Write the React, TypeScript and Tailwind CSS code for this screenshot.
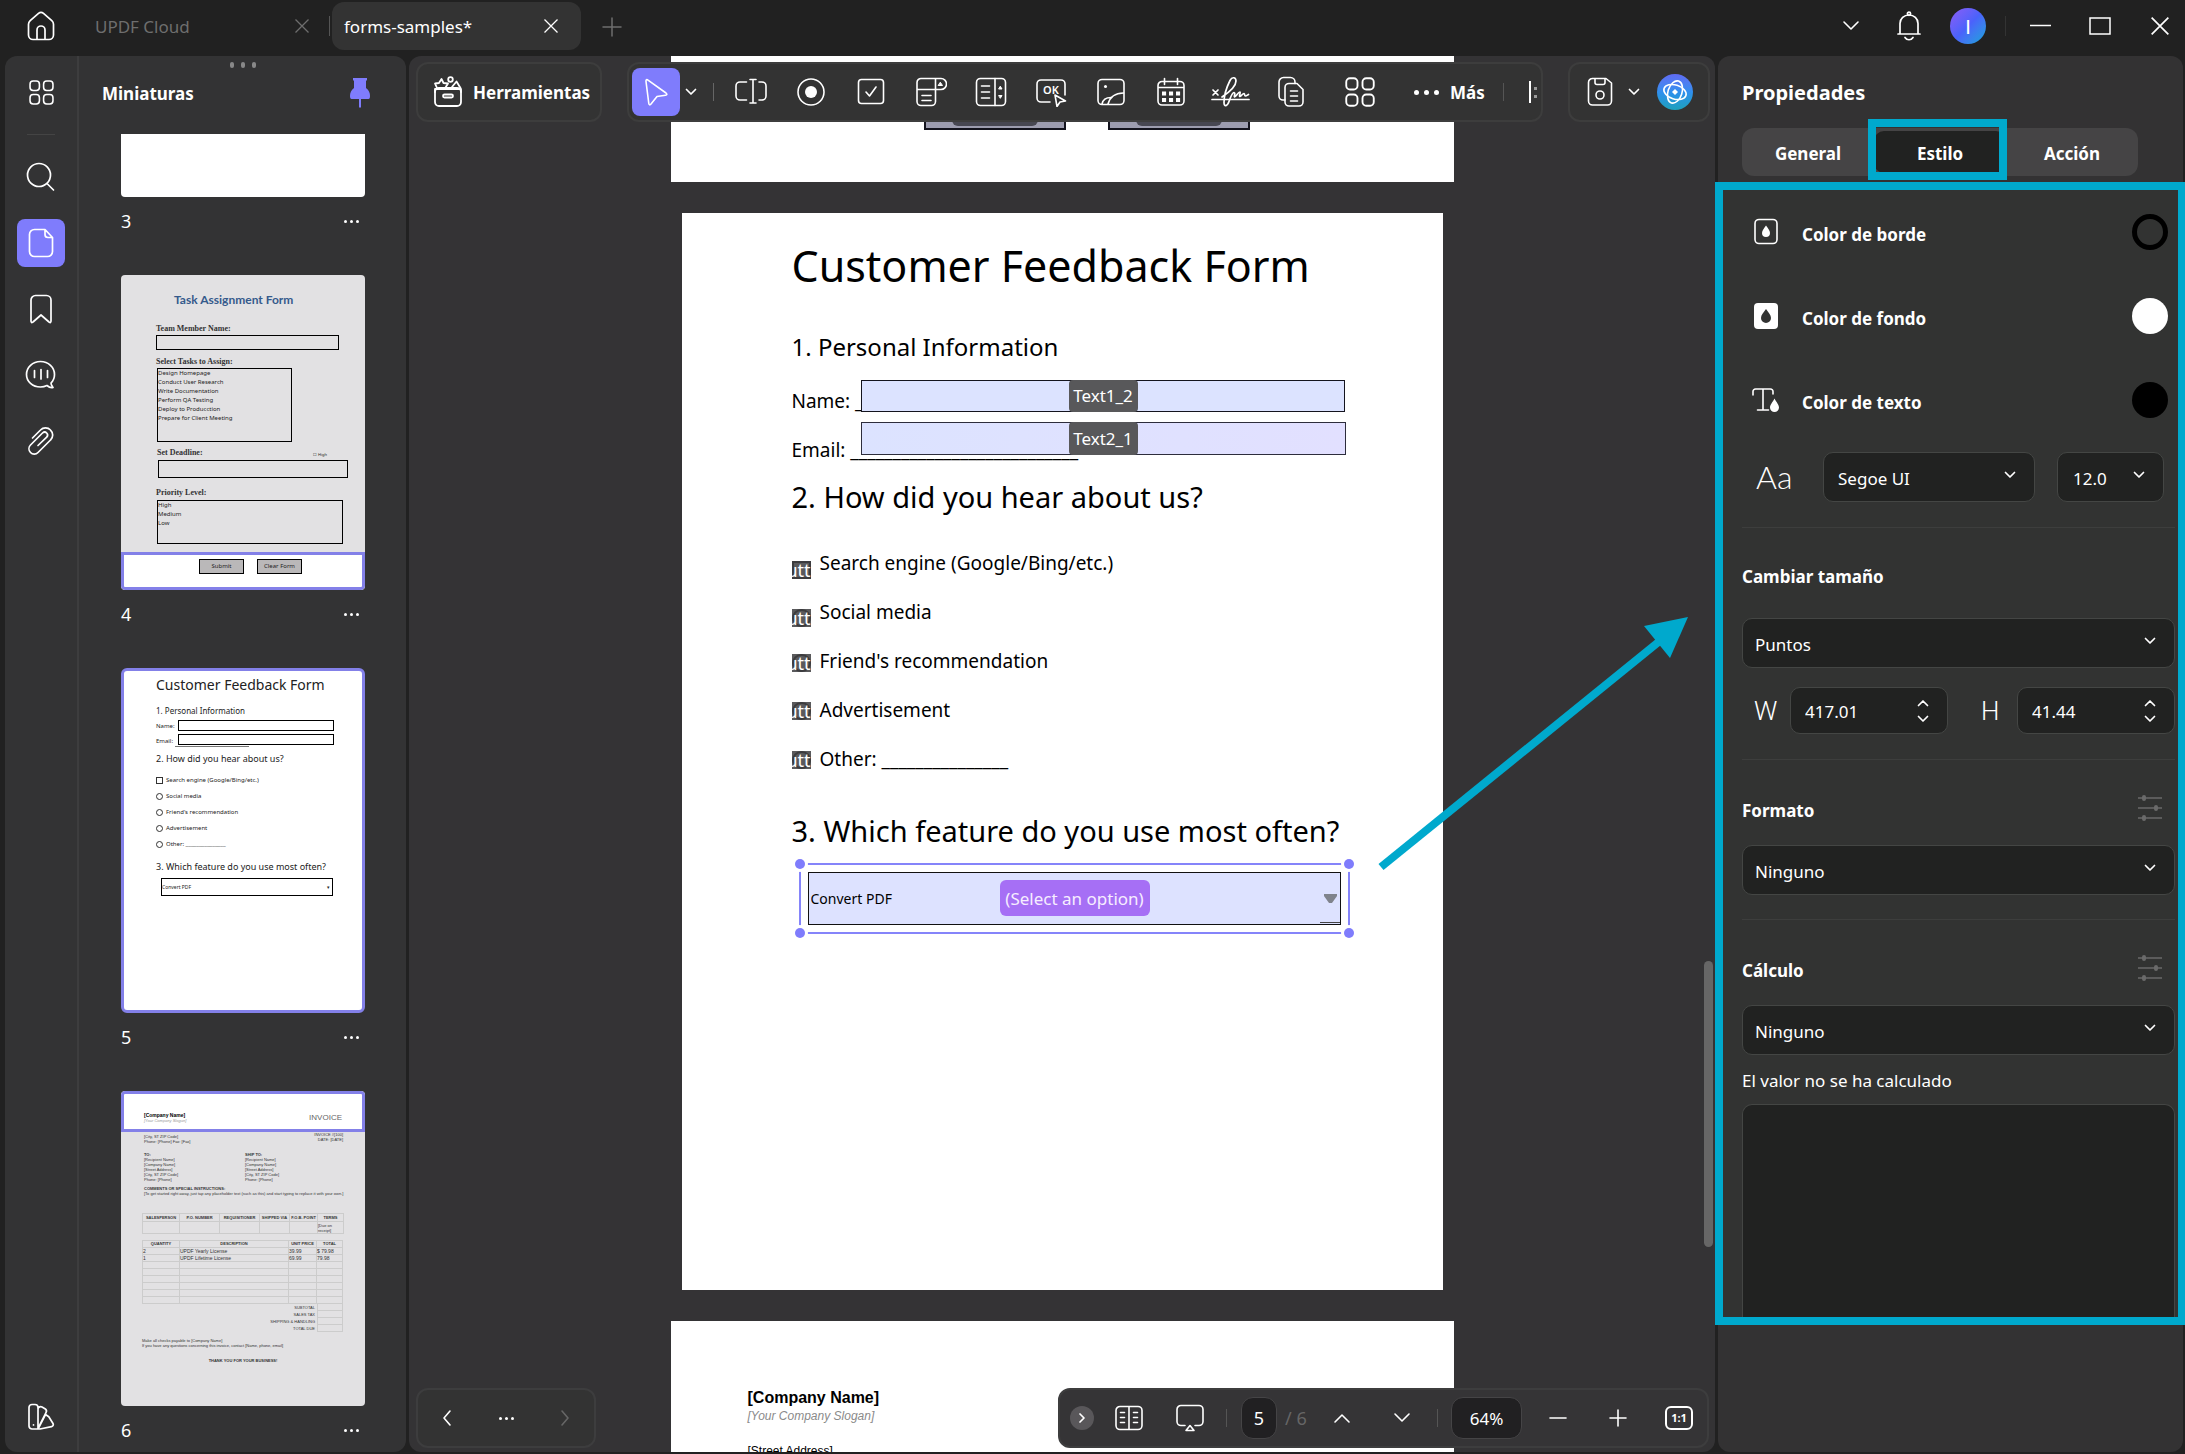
import React from "react";

type IconProps = { w?: number; h?: number; sw?: number; className?: string; children: React.ReactNode };

function Icon({ w = 30, h = 30, sw = 2, className = "", children }: IconProps) {
  return (
    <svg
      width={w}
      height={h}
      viewBox={`0 0 ${w} ${h}`}
      fill="none"
      stroke="currentColor"
      strokeWidth={sw}
      strokeLinecap="round"
      strokeLinejoin="round"
      className={`shrink-0 ${className}`}
      aria-hidden="true"
    >
      {children}
    </svg>
  );
}

const Chevron = ({ className = "" }: { className?: string }) => (
  <Icon w={12} h={8} sw={1.7} className={className}>
    <path d="M1.500 1.500 6 6l4.500-4.500" />
  </Icon>
);

const CloseIcon = ({ size = 14 }: { size?: number }) => (
  <svg width={size} height={size} viewBox="0 0 14 14" stroke="currentColor" strokeWidth="1.3" fill="none" aria-hidden="true">
    <path d="M0.500 0.500 13.500 13.500M13.500 0.500 0.500 13.500" />
  </svg>
);

const GridIcon = ({ s = 24 }: { s?: number }) => (
  <svg width={s} height={s} viewBox="0 0 24 24" fill="none" stroke="currentColor" strokeWidth="1.500" aria-hidden="true">
    <rect x="1" y="1" width="9" height="9" rx="3" />
    <rect x="14" y="1" width="9" height="9" rx="3" />
    <rect x="1" y="14" width="9" height="9" rx="3" />
    <rect x="14" y="14" width="9" height="9" rx="3" />
  </svg>
);

const SlidersIcon = () => (
  <Icon w={24} h={28} sw={2} className="text-[#6a6a6a]">
    <path d="M0 4h24M0 14h24M0 24h24" strokeWidth="1.500" />
    <path d="M6 3v2M18 13v2M6 23v2" strokeWidth="4" />
  </Icon>
);

function Dots({ size = 3 }: { size?: number }) {
  return (
    <svg width={size * 5} height={size} viewBox="0 0 15 3" fill="currentColor" aria-hidden="true">
      <circle cx="1.500" cy="1.500" r="1.500" />
      <circle cx="7.500" cy="1.500" r="1.500" />
      <circle cx="13.500" cy="1.500" r="1.500" />
    </svg>
  );
}

/* ---------- Title bar ---------- */

function TitleBar() {
  return (
    <header className="flex h-14 shrink-0 items-start text-white">
      <button aria-label="Inicio" className="ml-[17px] mt-[2px] flex size-12 items-center justify-center">
        <Icon w={28} h={30} sw={1.7}>
          <path d="M11.500 2.400 3.200 9.600A5 5 0 0 0 1.500 13.300V24a4.500 4.500 0 0 0 4.500 4.500h16a4.500 4.500 0 0 0 4.500-4.500V13.300a5 5 0 0 0-1.700-3.700L16.500 2.400a3.800 3.800 0 0 0-5 0Z" />
          <path d="M10 28V19a4 4 0 0 1 8 0v9" />
        </Icon>
      </button>
      <div className="flex h-13 w-[264px] items-center justify-between pl-[30px] pr-5 text-[#6e6e6e]">
        <button className="pt-[2px] text-[17px] leading-6">UPDF Cloud</button>
        <button aria-label="Cerrar UPDF Cloud">
          <CloseIcon />
        </button>
      </div>
      <div className="mr-[2px] mt-4 h-5 w-px bg-[#555]" />
      <div className="mt-[2px] flex h-12 w-[249px] items-center justify-between rounded-xl bg-[#333] pl-3 pr-[23px]">
        <button className="pt-[2px] text-[17px] leading-6">forms-samples*</button>
        <button aria-label="Cerrar forms-samples">
          <CloseIcon />
        </button>
      </div>
      <button aria-label="Nueva pestaña" className="ml-[21px] mt-[17px] text-[#6e6e6e]">
        <Icon w={20} h={20} sw={1.5}>
          <path d="M10 1v18M1 10h18" />
        </Icon>
      </button>
      <div className="ml-auto flex h-13 items-center">
        <button aria-label="Más pestañas" className="mr-[37px]">
          <Icon w={18} h={12} sw={1.6}>
            <path d="m2 2 7 7 7-7" />
          </Icon>
        </button>
        <button aria-label="Notificaciones" className="mr-[29px]">
          <Icon w={24} h={30} sw={1.7}>
            <circle cx="12" cy="2.800" r="1.600" />
            <path d="M3 23V12.500a9 8.500 0 0 1 18 0V23M1 23h22M8 26.500c2 3 6 3 8 0" />
          </Icon>
        </button>
        <button
          aria-label="Cuenta"
          className="mr-[19px] flex size-9 items-center justify-center rounded-full bg-linear-135 from-[#8a5cf6] via-[#4a62fb] to-[#06a4d8] font-['Lato',sans-serif] text-xl"
        >
          I
        </button>
        <div className="mr-6 h-5 w-px bg-[#333]" />
        <button aria-label="Minimizar" className="mr-[38px]">
          <svg width="21" height="20" stroke="currentColor" strokeWidth="1.500" aria-hidden="true">
            <path d="M0 9.500h21" />
          </svg>
        </button>
        <button aria-label="Maximizar" className="mr-10">
          <svg width="22" height="18" fill="none" stroke="currentColor" strokeWidth="1.500" aria-hidden="true">
            <rect x="1" y="1" width="20" height="16" />
          </svg>
        </button>
        <button aria-label="Cerrar" className="mr-4">
          <CloseIcon size={18} />
        </button>
      </div>
    </header>
  );
}

/* ---------- Left rail ---------- */

function RailButton({ label, active, children }: { label: string; active?: boolean; children: React.ReactNode }) {
  return (
    <button
      aria-label={label}
      className={`flex size-12 shrink-0 items-center justify-center rounded-lg text-white ${active ? "bg-[#7f7cfc]" : ""}`}
    >
      {children}
    </button>
  );
}

function Rail() {
  return (
    <nav className="flex w-[74px] shrink-0 flex-col items-center gap-[18px] border-r-2 border-[#3d3d3e] pb-[11px] pt-3">
      <RailButton label="Organizar">
        <GridIcon s={25} />
      </RailButton>
      <div className="h-px w-7 shrink-0 bg-[#444]" />
      <RailButton label="Buscar">
        <Icon sw={1.7}>
          <circle cx="13" cy="13" r="11.500" />
          <path d="m21.500 22 6 6" />
        </Icon>
      </RailButton>
      <RailButton label="Miniaturas" active>
        <Icon w={26} h={30} sw={1.7}>
          <path d="M17 1.500H6.500a5 5 0 0 0-5 5v17a5 5 0 0 0 5 5h13a5 5 0 0 0 5-5V9.500ZM17 1.500v5a3 3 0 0 0 3 3h4.500" />
        </Icon>
      </RailButton>
      <RailButton label="Marcadores">
        <Icon w={24} h={30} sw={1.7}>
          <path d="M2 6a4.500 4.500 0 0 1 4.500-4.500h11A4.500 4.500 0 0 1 22 6v21c0 1.500-1 2-2 1l-8-7-8 7c-1 1-2 .5-2-1Z" />
        </Icon>
      </RailButton>
      <RailButton label="Comentarios">
        <Icon w={32} h={30} sw={1.7}>
          <path d="M22 25.500A17 17 0 0 1 15.500 27C7.500 27 1.500 21.500 1.500 14.500S7.500 1.500 15.500 1.500s14 6 14 13a12 12 0 0 1-3.500 8.500c0 2 1 3 2 4.500-2 .6-4-.2-6-2ZM9.500 10.500v7M16 9.500v9.500M22.500 10.500v7" />
        </Icon>
      </RailButton>
      <RailButton label="Adjuntos">
        <Icon w={28} h={30} sw={1.7}>
          <path d="M5.500 12 13.500 4a6.800 6.800 0 0 1 10 0 6.800 6.800 0 0 1 0 10L11 26.500a5 5 0 0 1-7.500 0 5.400 5.400 0 0 1 0-7.500L15.500 7c1.300-1.200 3-1.200 4.200 0s1 3 0 4.200L11 19.500" />
        </Icon>
      </RailButton>
      <div className="mt-auto">
        <RailButton label="Apariencia">
          <Icon w={28} h={28} sw={1.7}>
            <path d="M2 4.500A3 3 0 0 1 5 1.500h3a3 3 0 0 1 3 3V26H5a3 3 0 0 1-3-3ZM11 5.500a3 3 0 0 1 4-1.500l3 1.700a3 3 0 0 1 1 4L11 25.500M18.500 11.500l3.300 2.300L26 20.500c.8 1.500 0 2.700-1.500 3.200L13 26h-2Z" />
            <path d="M6.500 21.800v.1" />
          </Icon>
        </RailButton>
      </div>
    </nav>
  );
}

/* ---------- Thumbnails ---------- */

function ThumbLabel({ n }: { n: number }) {
  return (
    <div className="mb-[30px] flex h-12 items-center justify-between pr-[6px] text-lg text-white">
      <span>{n}</span>
      <button aria-label={`Opciones de la página ${n}`}>
        <Dots />
      </button>
    </div>
  );
}

function ThumbFour() {
  return (
    <div className="flex h-[315px] flex-col overflow-hidden rounded bg-[#e2e1e3] text-[6px] leading-[9px] text-[#222]">
      <div className="mt-[17px] pl-[53px] font-['Lato',sans-serif] text-[12px] font-bold leading-4 text-[#355a8c]">Task Assignment Form</div>
      <div className="mt-4 pl-[35px] font-['Liberation_Serif',serif] text-[8px] font-bold leading-[10px] text-[#333]">Team Member Name:</div>
      <div className="ml-[35px] mt-px h-[15px] w-[183px] border border-black" />
      <div className="mt-[7px] pl-[35px] font-['Liberation_Serif',serif] text-[8px] font-bold leading-[10px] text-[#333]">Select Tasks to Assign:</div>
      <div className="ml-9 mt-px h-[74px] w-[135px] border border-black">
        <div>Design Homepage</div>
        <div>Conduct User Research</div>
        <div>Write Documentation</div>
        <div>Perform QA Testing</div>
        <div>Deploy to Producction</div>
        <div>Prepare for Client Meeting</div>
      </div>
      <div className="mt-[6px] flex justify-between pl-9 pr-[38px]">
        <span className="font-['Liberation_Serif',serif] text-[8px] font-bold leading-[10px] text-[#333]">Set Deadline:</span>
        <span className="pt-1 text-[4px] leading-[6px]">☐ High</span>
      </div>
      <div className="ml-[37px] mt-[2px] h-[18px] w-[190px] border border-black" />
      <div className="mt-[10px] pl-[35px] font-['Liberation_Serif',serif] text-[8px] font-bold leading-[10px] text-[#333]">Priority Level:</div>
      <div className="ml-9 mt-[2px] h-11 w-[186px] border border-black">
        <div>High</div>
        <div>Medium</div>
        <div>Low</div>
      </div>
      <div className="mt-auto flex h-[38px] gap-[13px] rounded-b border-[3px] border-[#8380e8] bg-white pl-[75px] pt-1">
        <div className="flex h-[15px] w-[45px] items-center justify-center border border-black bg-[#bab8b9]">Submit</div>
        <div className="flex h-[15px] w-[45px] items-center justify-center border border-black bg-[#bab8b9]">Clear Form</div>
      </div>
    </div>
  );
}

const choices = ["Search engine (Google/Bing/etc.)", "Social media", "Friend's recommendation", "Advertisement", "Other: _______________"];

function ThumbFive() {
  return (
    <div className="h-[345px] overflow-hidden rounded-md border-[3px] border-[#8380e8] bg-white pl-8 text-[6px] leading-[10px] text-[#222]">
      <div className="mt-[4px] text-[14px] leading-5">Customer Feedback Form</div>
      <div className="mt-[11px] text-[8px] leading-[10px]">1. Personal Information</div>
      <div className="mt-1 flex items-end gap-1">
        <span className="w-[18px]">Name:</span>
        <div className="h-[11px] w-[156px] border border-black" />
      </div>
      <div className="mt-[3px] flex h-3 items-start gap-1">
        <span className="w-[18px] pt-[2px]">Email:</span>
        <div className="h-[11px] w-[156px] border border-black" />
      </div>
      <div className="ml-[19px] w-[74px] border-t border-[#777]" />
      <div className="mt-[5px] text-[9px] leading-[14px]">2. How did you hear about us?</div>
      <div className="mt-[6px]">
        {choices.map((c, i) => (
          <div key={c} className="flex h-4 items-center gap-[3px]">
            <span className={`size-[7px] border border-[#333] ${i ? "rounded-full" : ""}`} />
            <span className="whitespace-nowrap">{c}</span>
          </div>
        ))}
      </div>
      <div className="mt-2 whitespace-nowrap text-[9px] leading-[14px]">3. Which feature do you use most often?</div>
      <div className="ml-[5px] mt-1 flex h-[18px] w-[172px] items-center justify-between border border-black pr-[2px] text-[5px]">
        <span>Convert PDF</span>
        <span>▾</span>
      </div>
    </div>
  );
}

const address = ["[Recipient Name]", "[Company Name]", "[Street Address]", "[City, ST ZIP Code]", "Phone: [Phone]"];

function ThumbSix() {
  return (
    <div className="h-[315px] overflow-hidden rounded bg-[#e2e1e3] font-['Liberation_Sans',sans-serif] text-[4px] leading-[5px] text-[#333]">
      <div className="flex h-[41px] justify-between rounded-t border-[3px] border-[#8380e8] bg-white pl-5 pr-5 pt-[18px]">
        <div className="leading-[6px]">
          <div className="text-[5px] font-bold text-black">[Company Name]</div>
          <div className="italic text-[#999]">[Your Company Slogan]</div>
        </div>
        <div className="text-[8px] leading-3 text-[#666]">INVOICE</div>
      </div>
      <div className="flex justify-between pl-[23px] pr-[22px]">
        <div className="pt-[2px]">
          <div>[City, ST ZIP Code]</div>
          <div>Phone: [Phone] Fax: [Fax]</div>
        </div>
        <div className="text-right">
          <div>INVOICE #[100]</div>
          <div>DATE: [DATE]</div>
        </div>
      </div>
      <div className="mt-2 grid grid-cols-[101px_1fr] pl-[23px]">
        {["TO:", "SHIP TO:"].map((t) => (
          <div key={t}>
            <div className="font-bold">{t}</div>
            {address.map((a) => (
              <div key={a}>{a}</div>
            ))}
          </div>
        ))}
      </div>
      <div className="mt-1 pl-[23px]">
        <div className="font-bold">COMMENTS OR SPECIAL INSTRUCTIONS:</div>
        <div className="whitespace-nowrap">[To get started right away, just tap any placeholder text (such as this) and start typing to replace it with your own.]</div>
      </div>
      <table className="ml-[21px] mt-[17px] w-[201px] table-fixed border-collapse text-center">
        <tbody>
          <tr className="h-2 font-bold">
            <td className="w-[37px] border border-[#ccc]">SALESPERSON</td>
            <td className="w-10 border border-[#ccc]">P.O. NUMBER</td>
            <td className="w-10 border border-[#ccc]">REQUISITIONER</td>
            <td className="w-[30px] border border-[#ccc]">SHIPPED VIA</td>
            <td className="w-7 border border-[#ccc]">F.O.B. POINT</td>
            <td className="w-[26px] border border-[#ccc]">TERMS</td>
          </tr>
          <tr className="h-3">
            {[0, 1, 2, 3, 4].map((i) => (
              <td key={i} className="border border-[#ccc]" />
            ))}
            <td className="border border-[#ccc] text-left">[Due on receipt]</td>
          </tr>
        </tbody>
      </table>
      <table className="ml-[21px] mt-[6px] w-[201px] table-fixed border-collapse text-[5px] leading-[6px]">
        <tbody>
          <tr className="h-[7px] text-center text-[4px] font-bold">
            <td className="w-[37px] border border-[#ccc]">QUANTITY</td>
            <td className="border border-[#ccc]">DESCRIPTION</td>
            <td className="w-7 border border-[#ccc]">UNIT PRICE</td>
            <td className="w-[26px] border border-[#ccc]">TOTAL</td>
          </tr>
          {[
            ["2", "UPDF Yearly License", "39.99", "$ 79.98"],
            ["1", "UPDF Lifetime License", "69.99", "79.98"],
            ["", "", "", ""],
            ["", "", "", ""],
            ["", "", "", ""],
            ["", "", "", ""],
            ["", "", "", ""],
            ["", "", "", ""],
          ].map((r, i) => (
            <tr key={i} className="h-[7px]">
              {r.map((c, j) => (
                <td key={j} className="border border-[#ccc]">
                  {c}
                </td>
              ))}
            </tr>
          ))}
        </tbody>
      </table>
      <div className="ml-[21px] w-[201px]">
        {["SUBTOTAL", "SALES TAX", "SHIPPING & HANDLING", "TOTAL DUE"].map((t) => (
          <div key={t} className="flex h-[7px] items-center justify-end gap-[2px]">
            {t}
            <span className="h-[7px] w-[26px] border-x border-b border-[#ccc]" />
          </div>
        ))}
      </div>
      <div className="mt-[6px] pl-[21px]">
        <div>Make all checks payable to [Company Name]</div>
        <div>If you have any questions concerning this invoice, contact [Name, phone, email]</div>
      </div>
      <div className="mt-[10px] text-center font-bold">THANK YOU FOR YOUR BUSINESS!</div>
    </div>
  );
}

function Thumbnails() {
  return (
    <section className="flex min-w-0 flex-1 flex-col text-white">
      <div className="flex justify-center gap-[7px] pt-[6px]">
        <span className="h-[6px] w-1 rounded bg-[#888]" />
        <span className="h-[6px] w-1 rounded bg-[#888]" />
        <span className="h-[6px] w-1 rounded bg-[#888]" />
      </div>
      <div className="flex h-[66px] items-start justify-between pl-[23px] pr-9 pt-[10px]">
        <h2 className="pt-1 text-[17px] font-bold leading-6">Miniaturas</h2>
        <button aria-label="Fijar panel" className="text-[#7f7cfc]">
          <svg width="20" height="30" viewBox="0 0 20 30" fill="currentColor" aria-hidden="true">
            <path d="M3 0h14v2.500h-1v7.500c3 2 4 5 4 8 0 2-.5 3-1.500 3h-17C.5 21 0 20 0 18c0-3 1-6 4-8V2.500H3ZM9 21h2v8.500H9Z" />
          </svg>
        </button>
      </div>
      <div className="min-h-0 flex-1 overflow-hidden pl-[42px] pr-[41px]">
        <div className="h-[63px] rounded-b bg-white" />
        <ThumbLabel n={3} />
        <ThumbFour />
        <ThumbLabel n={4} />
        <ThumbFive />
        <ThumbLabel n={5} />
        <ThumbSix />
        <ThumbLabel n={6} />
      </div>
    </section>
  );
}

/* ---------- Canvas toolbars ---------- */

const formTools: { label: string; icon: React.ReactNode }[] = [
  {
    label: "Campo de texto",
    icon: (
      <Icon w={34} h={30} sw={1.6}>
        <path d="M12.500 5H6a4 4 0 0 0-4 4v10a4 4 0 0 0 4 4h6.500M25 5h3a4 4 0 0 1 4 4v10a4 4 0 0 1-4 4h-3M16 2.500h6M16 26h6M19 2.500V26" />
      </Icon>
    ),
  },
  {
    label: "Botón de opción",
    icon: (
      <Icon sw={1.6}>
        <circle cx="15" cy="15" r="13" />
        <circle cx="15" cy="15" r="6" fill="currentColor" stroke="none" />
      </Icon>
    ),
  },
  {
    label: "Casilla",
    icon: (
      <Icon w={28} h={30} sw={1.6}>
        <rect x="1.500" y="2.500" width="25" height="24" rx="3" />
        <path d="m9 15 3.500 4 6.500-9" />
      </Icon>
    ),
  },
  {
    label: "Menú desplegable",
    icon: (
      <Icon w={32} h={30} sw={1.6}>
        <path d="M6 1.500h20a5 5 0 0 1 0 11H2V5.500a4 4 0 0 1 4-4ZM20.500 1.500v23a4 4 0 0 1-4 4H6a4 4 0 0 1-4-4v-12M7 18.500h9M7 23.500h9" />
        <path d="M23.500 8.500h4l-2-3Z" fill="currentColor" strokeWidth="1" />
      </Icon>
    ),
  },
  {
    label: "Cuadro de lista",
    icon: (
      <Icon w={32} h={30} sw={1.6}>
        <rect x="1.500" y="1.500" width="29" height="27" rx="4" />
        <path d="M20 1.500v27M6.500 9h8M6.500 15h8M6.500 21h8" />
        <path d="M24 12h3l-1.500-2.500ZM24 18.500h3L25.500 21Z" fill="currentColor" strokeWidth="1" />
      </Icon>
    ),
  },
  {
    label: "Botón",
    icon: (
      <Icon w={32} h={30} sw={1.6}>
        <path d="M15 25H6a4 4 0 0 1-4-4V7a4 4 0 0 1 4-4h20a4 4 0 0 1 4 4v11M20 18l2 11.500 3-4.500 5.500-1Z" />
        <text x="8" y="17" fill="currentColor" stroke="none" fontSize="11" fontWeight="600">
          OK
        </text>
      </Icon>
    ),
  },
  {
    label: "Imagen",
    icon: (
      <Icon w={30} h={30} sw={1.6}>
        <rect x="2" y="2.500" width="26" height="25" rx="4" />
        <path d="M6 27c1-5 5-6.500 9-6.500M12 27c2-7 7-11 15.500-11" />
        <circle cx="9.500" cy="9.500" r="1.500" fill="currentColor" stroke="none" />
      </Icon>
    ),
  },
  {
    label: "Fecha",
    icon: (
      <Icon w={30} h={30} sw={1.6}>
        <path d="M6 4.500h18a4 4 0 0 1 4 4V24a4 4 0 0 1-4 4H6a4 4 0 0 1-4-4V8.500a4 4 0 0 1 4-4ZM2 10.500h26M8.500 1.500v6M21.500 1.500v6" />
        <path d="M8 16.500h.1M15 16.500h.1M22 16.500h.1M8 23h.1M15 23h.1M22 23h.1" strokeWidth="4" strokeLinecap="square" />
      </Icon>
    ),
  },
  {
    label: "Firma",
    icon: (
      <Icon w={40} h={32} sw={1.7}>
        <path d="m2 14 5 5M7 14l-5 5" />
        <path d="M1 23.500h37" />
        <path d="M11 21c6-4 14-10 14-16 0-4-4-4.500-6-.5-3 6-6 15-6 22 0 5 3.500 3.500 5-1 1.500-4 3-9 5-9 2 .5-.5 4 .5 4.500 1.500 0 4-5.500 5.500-5 1 .5-1.500 4.500 0 4.500 1.500-.5 2.500-3 4-3 1.200.3 0 2.500 1.500 2.500 1 0 2-1 3-1.500" />
      </Icon>
    ),
  },
  {
    label: "Duplicar campos",
    icon: (
      <Icon w={28} h={32} sw={1.6}>
        <path d="M8 24H6a4 4 0 0 1-4-4V6a4.500 4.500 0 0 1 4.500-4.500h7A4.500 4.500 0 0 1 18 6v1.500" />
        <path d="M12 7.500h8l6 6V26a4 4 0 0 1-4 4H12a4 4 0 0 1-4-4V11.500a4 4 0 0 1 4-4ZM13.500 15h7M13.500 20h7M13.500 25h7" />
      </Icon>
    ),
  },
];

function TopToolbar() {
  return (
    <div className="absolute left-[7px] right-[5px] top-[6px] flex h-15 text-white">
      <button className="flex w-[186px] shrink-0 items-center gap-[10px] rounded-xl border-2 border-[#3d3d3d] bg-[#333] pl-[15px] text-[17px] font-bold">
        <Icon w={30} h={32} sw={1.8}>
          <rect x="2" y="12" width="26" height="18" rx="4" />
          <path d="M2 16V13h26v3M11.500 18.500h7a1.500 1.500 0 0 1 0 3h-7a1.500 1.500 0 0 1 0-3ZM4 12 2 7.500l4-.5 2.500-4 2 4 4.500.5-2.500 4M19 11l4.500-5.500L27.500 12" />
          <circle cx="17.500" cy="3.500" r="2.300" />
        </Icon>
        <span className="pt-[2px]">Herramientas</span>
      </button>
      <div className="ml-[25px] flex min-w-0 flex-1 items-center overflow-hidden rounded-xl border-2 border-[#3d3d3d] bg-[#333] pl-[3px]">
        <button aria-label="Seleccionar" className="flex size-12 shrink-0 items-center justify-center rounded-lg bg-[#7f7cfc]">
          <Icon w={26} h={30} sw={1.6}>
            <path d="M3 4.500c-.2-1.800.8-2.300 2-1.300L23 16c1.500 1.200 1 2-.5 2.200l-8.500 1.300L8 27c-1 1.300-2 1-2.200-.5Z" />
          </Icon>
        </button>
        <button aria-label="Opciones de selección" className="ml-[5px] shrink-0">
          <Chevron />
        </button>
        <div className="ml-4 mr-[7px] h-[18px] w-px shrink-0 bg-[#666]" />
        {formTools.map((t) => (
          <button key={t.label} aria-label={t.label} className="flex h-12 w-15 shrink-0 items-center justify-center">
            {t.icon}
          </button>
        ))}
        <button aria-label="Alinear" className="flex h-12 w-[78px] shrink-0 items-center justify-center">
          <GridIcon s={30} />
        </button>
        <button className="ml-[15px] flex shrink-0 items-center gap-[11px] text-[17px] font-bold">
          <Dots size={5} />
          <span className="pt-[2px]">Más</span>
        </button>
        <div className="ml-[18px] h-[18px] w-px shrink-0 bg-[#555]" />
        <button aria-label="Alinear a la izquierda" className="ml-[25px] shrink-0">
          <svg width="12" height="24" viewBox="0 0 12 24" fill="currentColor" aria-hidden="true">
            <path d="M0 1h2v22H0Z" />
            <path d="M5 7h3v3H5ZM5 15h3v3H5Z" opacity=".5" />
          </svg>
        </button>
      </div>
      <div className="ml-[25px] flex w-[142px] shrink-0 items-center rounded-xl border-2 border-[#3d3d3d] bg-[#333] pl-[17px]">
        <button aria-label="Guardar">
          <Icon w={26} h={30} sw={1.6}>
            <path d="M5 1.500h14L24.500 6v18a4 4 0 0 1-4 4h-15a4 4 0 0 1-4-4V5.500a4 4 0 0 1 4-4ZM8 1.500v4a2 2 0 0 0 2 2h6a2 2 0 0 0 2-2v-4" />
            <circle cx="13" cy="18" r="4" />
          </Icon>
        </button>
        <button aria-label="Opciones de guardado" className="ml-[15px]">
          <Chevron />
        </button>
        <button
          aria-label="Asistente de IA"
          className="ml-[17px] flex size-9 items-center justify-center rounded-full bg-linear-to-b from-[#5f6bf4] via-[#2f8fee] to-[#1fa0bb]"
        >
          <Icon w={30} h={30} sw={1.6}>
            <ellipse cx="15" cy="15" rx="7" ry="11.500" transform="rotate(18 15 15)" />
            <ellipse cx="15" cy="15" rx="7" ry="11.500" transform="rotate(108 15 15)" />
            <path d="m15 12 3 3-3 3-3-3Z" fill="currentColor" stroke="none" />
          </Icon>
        </button>
      </div>
    </div>
  );
}

function BottomToolbars() {
  return (
    <div className="absolute bottom-1 left-[7px] right-[6px] flex h-15 justify-between text-white">
      <div className="flex w-[180px] items-center justify-between rounded-xl border-2 border-[#3d3d3e] bg-[#333] px-6">
        <button aria-label="Vista anterior">
          <Icon w={10} h={18} sw={1.6}>
            <path d="M8 2 2 9l6 7" />
          </Icon>
        </button>
        <button aria-label="Más vistas">
          <Dots />
        </button>
        <button aria-label="Vista siguiente" className="text-[#666]">
          <Icon w={10} h={18} sw={1.6}>
            <path d="m2 2 6 7-6 7" />
          </Icon>
        </button>
      </div>
      <div className="flex w-[651px] items-center rounded-xl border-2 border-[#3d3d3e] bg-[#353436] pl-[10px]">
        <button aria-label="Contraer barra" className="flex size-6 items-center justify-center rounded-full bg-[#59575a]">
          <Icon w={8} h={12} sw={1.7}>
            <path d="m2 2 4 4-4 4" />
          </Icon>
        </button>
        <button aria-label="Modo de lectura" className="ml-5">
          <Icon w={30} h={26} sw={1.6}>
            <path d="M6 1.500h18a4 4 0 0 1 4 4v15a4 4 0 0 1-4 4H6a4 4 0 0 1-4-4v-15a4 4 0 0 1 4-4ZM15 1.500v23M6.500 7.500h4M6.500 12.500h4M6.500 17.500h4M19.500 7.500h4M19.500 12.500h4M19.500 17.500h4" />
          </Icon>
        </button>
        <button aria-label="Presentación" className="ml-[31px]">
          <Icon w={30} h={28} sw={1.6}>
            <path d="M10 21.500H6a4 4 0 0 1-4-4v-12a4 4 0 0 1 4-4h18a4 4 0 0 1 4 4v12a4 4 0 0 1-4 4h-4M15 21.500l4 5h-8Z" />
          </Icon>
        </button>
        <div className="ml-[21px] h-[18px] w-px bg-[#555]" />
        <input
          aria-label="Página"
          defaultValue="5"
          className="ml-[14px] h-[42px] w-9 rounded-xl border border-[#454446] bg-[#212022] text-center text-lg text-white"
        />
        <span className="ml-2 w-7 text-lg text-[#666]">/ 6</span>
        <button aria-label="Página anterior" className="ml-5">
          <Icon w={18} h={12} sw={1.6}>
            <path d="m2 10 7-7 7 7" />
          </Icon>
        </button>
        <button aria-label="Página siguiente" className="ml-[42px]">
          <Icon w={18} h={12} sw={1.6}>
            <path d="m2 2 7 7 7-7" />
          </Icon>
        </button>
        <div className="ml-[26px] h-[18px] w-px bg-[#555]" />
        <input
          aria-label="Zoom"
          defaultValue="64%"
          className="ml-[13px] h-[42px] w-[71px] rounded-xl border border-[#454446] bg-[#212022] text-center text-[17px] text-white"
        />
        <button aria-label="Alejar" className="ml-[26px]">
          <Icon w={20} h={18} sw={1.6}>
            <path d="M2 9h16" />
          </Icon>
        </button>
        <button aria-label="Acercar" className="ml-10">
          <Icon w={20} h={18} sw={1.6}>
            <path d="M2 9h16M10 1v16" />
          </Icon>
        </button>
        <button aria-label="Tamaño real" className="ml-[37px] flex h-6 w-7 items-center justify-center rounded-md border-2 border-white text-[11px] font-bold leading-4">
          1:1
        </button>
      </div>
    </div>
  );
}

/* ---------- Document pages ---------- */

function FieldTag({ children }: { children: React.ReactNode }) {
  return <span className="absolute inset-y-0 left-[208px] flex w-[69px] items-center justify-center rounded bg-[#58585a] text-[17px] text-white">{children}</span>;
}

const tagOffsets = ["mt-3", "mt-[10px]", "mt-[2px]", "mt-0", "mt-0"];

function FeedbackPage() {
  return (
    <article className="mx-auto mt-[31px] h-[1077px] w-[761px] shrink-0 bg-white pl-[110px] pt-[22px] text-black">
      <h1 className="whitespace-nowrap text-[43px] leading-[62px]">Customer Feedback Form</h1>
      <h2 className="mt-8 text-[24px] leading-9">1. Personal Information</h2>
      <div className="relative mt-5 h-[30px] text-[19px] leading-8">
        <label htmlFor="name">Name: _</label>
        <div className="absolute left-[69px] -top-[5px] h-8 w-[484px]">
          <input id="name" className="size-full border border-[#14141e] bg-[#dce3ff]" />
          <FieldTag>Text1_2</FieldTag>
        </div>
      </div>
      <div className="relative mt-5 h-[30px] text-[19px] leading-[30px]">
        <label htmlFor="email">Email: ___________________________</label>
        <div className="absolute left-[69px] -top-[13px] h-[33px] w-[485px]">
          <input id="email" className="size-full border border-[#2d2d3c] bg-linear-to-r from-[#dce3ff] to-[#e2e0ff]" />
          <FieldTag>Text2_1</FieldTag>
        </div>
      </div>
      <h2 className="mt-3 text-[29px] leading-10">2. How did you hear about us?</h2>
      <div className="mt-[22px] text-[19px]">
        {choices.map((c, i) => (
          <label key={c} className="flex h-[49px] items-center gap-[9px]">
            <span className={`relative h-[18px] w-[19px] overflow-hidden bg-[#5a5a5c] ${tagOffsets[i]}`}>
              <input
                type={i === 0 ? "checkbox" : "radio"}
                name="source"
                className={`absolute inset-0 size-full appearance-none border-2 border-[#3c3c3e] ${i === 0 ? "" : "rounded-full"}`}
              />
              <span className="absolute -left-[5px] -top-px text-lg leading-5 text-white">utt</span>
            </span>
            {c}
          </label>
        ))}
      </div>
      <h2 className="mt-[27px] whitespace-nowrap text-[29px] leading-10">3. Which feature do you use most often?</h2>
      <div className="relative ml-[7px] mt-3 h-[71px] w-[551px] border-2 border-[#8584fa] p-[7px]">
        <span className="absolute -left-[6px] -top-[6px] size-[10px] rounded-full bg-[#7f7cfc] ring-3 ring-white" />
        <span className="absolute -right-[6px] -top-[6px] size-[10px] rounded-full bg-[#7f7cfc] ring-3 ring-white" />
        <span className="absolute -bottom-[6px] -left-[6px] size-[10px] rounded-full bg-[#7f7cfc] ring-3 ring-white" />
        <span className="absolute -bottom-[6px] -right-[6px] size-[10px] rounded-full bg-[#7f7cfc] ring-3 ring-white" />
        <div className="relative size-full">
          <select aria-label="Función" className="size-full appearance-none border border-[#111] bg-[#dde2ff] pl-[2px] text-[14px] text-black">
            <option>Convert PDF</option>
          </select>
          <span className="absolute left-[192px] top-[8px] flex h-9 w-[150px] items-center justify-center rounded-md bg-[#a66ff5] pt-[2px] text-[17px] text-[#f6edff]">
            (Select an option)
          </span>
          <svg className="absolute right-1 top-[22px]" width="13" height="10" viewBox="0 0 13 10" fill="#7f838c" aria-hidden="true">
            <path d="M0 0h13v2L8 9H5L0 2Z" />
          </svg>
          <span className="absolute bottom-[2px] right-[1px] h-px w-5 bg-[#444]" />
        </div>
      </div>
    </article>
  );
}

function Canvas() {
  return (
    <main className="relative flex min-w-0 flex-1 flex-col overflow-hidden rounded-xl bg-[#343335]">
      <article className="mx-auto h-[126px] w-[783px] shrink-0 bg-white pl-[253px] pt-[43px]">
        <div className="flex gap-[42px]">
          {["Submit", "Clear Form"].map((t) => (
            <div key={t} className="flex h-[31px] w-[142px] justify-center border-2 border-[#14141e] bg-[#9d9db0]">
              <span className="h-[25px] w-[86px] rounded-md bg-[#474752] text-center text-[15px] leading-5 text-white">{t}</span>
            </div>
          ))}
        </div>
      </article>
      <FeedbackPage />
      <article className="mx-auto mt-[31px] h-[1107px] w-[783px] shrink-0 bg-white pl-[77px] pt-[67px] font-['Liberation_Sans',sans-serif] text-black">
        <div className="text-base font-bold leading-5">[Company Name]</div>
        <div className="text-xs italic leading-4 text-[#8a8a8a]">[Your Company Slogan]</div>
        <div className="mt-[19px] text-xs leading-4">[Street Address]</div>
      </article>
      <TopToolbar />
      <BottomToolbars />
      <div className="absolute right-[2px] top-[905px] h-[286px] w-[9px] rounded-full bg-[#666]" />
    </main>
  );
}

/* ---------- Properties ---------- */

function Select({ label, value, className, pad }: { label: string; value: string; className: string; pad: string }) {
  return (
    <div className={`relative h-[50px] ${className}`}>
      <select
        aria-label={label}
        className={`size-full appearance-none rounded-[10px] border border-[#444644] bg-[#212221] pt-[3px] text-[17px] text-white ${pad}`}
      >
        <option>{value}</option>
      </select>
      <Chevron className="pointer-events-none absolute right-[19px] top-[19px] text-white" />
    </div>
  );
}

function NumberField({ label, value }: { label: string; value: string }) {
  return (
    <div className="flex items-center">
      <label htmlFor={`size-${label}`} className="w-9 font-['Roboto','Noto_Sans',sans-serif] text-[26px] font-light leading-8">
        {label}
      </label>
      <div className="flex h-[47px] w-[158px] items-center justify-between rounded-[10px] border border-[#444644] bg-[#212221] pl-[14px] pr-[18px]">
        <input id={`size-${label}`} defaultValue={value} className="w-20 bg-transparent pt-[2px] text-[17px] text-white" />
        <span className="flex flex-col gap-2">
          <button aria-label={`Aumentar ${label}`}>
            <Chevron className="rotate-180" />
          </button>
          <button aria-label={`Reducir ${label}`}>
            <Chevron />
          </button>
        </span>
      </div>
    </div>
  );
}

function ColorRow({ label, icon, swatch }: { label: string; icon: React.ReactNode; swatch: string }) {
  return (
    <div className="flex h-21 items-center pl-[10px] pr-[7px]">
      <span className="flex w-[50px] pl-[2px]">{icon}</span>
      <span className="pt-[6px] text-[17px] font-bold">{label}</span>
      <button aria-label={label} className={`ml-auto size-9 rounded-full ${swatch}`} />
    </div>
  );
}

function Properties() {
  return (
    <aside className="flex w-[465px] shrink-0 flex-col rounded-xl bg-[#333233] text-white">
      <h2 className="pl-6 pt-[23px] text-[20px] font-bold leading-7">Propiedades</h2>
      <div className="relative ml-6 mt-[21px] grid h-12 w-[396px] shrink-0 grid-cols-3 rounded-xl bg-[#454445] text-[17px] font-bold">
        <button className="pt-1">General</button>
        <button className="my-[3px] rounded-[10px] bg-[#212221] pt-1">Estilo</button>
        <button className="pt-1">Acción</button>
        <span className="pointer-events-none absolute -top-[9px] left-[126px] h-[61px] w-[139px] border-8 border-[#00a9cd]" />
      </div>
      <section className="-mx-[3px] mt-[6px] border-8 border-[#00a9cd] bg-[#323332] pl-[19px] pr-[3px]">
        <ColorRow
          label="Color de borde"
          swatch="border-5 border-black"
          icon={
            <Icon w={24} h={28} sw={1.6}>
              <rect x="1" y="1.500" width="22" height="24" rx="4" />
              <path d="M12 7.500c2 3 4 5 4 7.500a4 4 0 0 1-8 0c0-2.500 2-4.500 4-7.500Z" fill="currentColor" stroke="none" />
            </Icon>
          }
        />
        <ColorRow
          label="Color de fondo"
          swatch="bg-white"
          icon={
            <svg width="24" height="28" viewBox="0 0 24 28" fill="white" aria-hidden="true">
              <rect y="1" width="24" height="26" rx="4" />
              <path d="M12 7c2.500 3.500 5 6 5 9a5 5 0 0 1-10 0c0-3 2.500-5.500 5-9Z" fill="#323332" />
            </svg>
          }
        />
        <ColorRow
          label="Color de texto"
          swatch="bg-black"
          icon={
            <Icon w={28} h={28} sw={1.6} className="-ml-[2px]">
              <path d="M1 9V5.500A2.500 2.500 0 0 1 3.500 3h15A2.500 2.500 0 0 1 21 5.500V8M11 3v21M5.500 24h11" />
              <path d="M22.500 12.500c2 4 4.500 6 4.500 9a4.500 4.500 0 0 1-9 0c0-3 2.500-5 4.500-9Z" fill="currentColor" stroke="none" />
            </Icon>
          }
        />
        <div className="mt-[10px] flex items-center">
          <span className="w-[81px] pl-[14px] font-['Lato','Noto_Sans',sans-serif] text-[32px] font-light leading-9">Aa</span>
          <Select label="Fuente" value="Segoe UI" className="w-[212px]" pad="pl-[14px]" />
          <Select label="Tamaño de fuente" value="12.0" className="ml-[22px] w-[107px]" pad="pl-[15px]" />
        </div>
        <hr className="mt-[25px] border-[#3d3e3d]" />
        <h3 className="mt-[37px] text-[17px] font-bold leading-6">Cambiar tamaño</h3>
        <Select label="Unidad" value="Puntos" className="mt-[29px] w-full" pad="pl-3" />
        <div className="mt-[19px] flex justify-between pl-[12px]">
          <NumberField label="W" value="417.01" />
          <NumberField label="H" value="41.44" />
        </div>
        <hr className="mt-[25px] border-[#3d3e3d]" />
        <div className="mt-[34px] flex h-7 items-center justify-between pr-[13px]">
          <h3 className="pt-[6px] text-[17px] font-bold leading-6">Formato</h3>
          <button aria-label="Ajustes de formato">
            <SlidersIcon />
          </button>
        </div>
        <Select label="Formato" value="Ninguno" className="mt-[23px] w-full" pad="pl-3" />
        <hr className="mt-6 border-[#3d3e3d]" />
        <div className="mt-[34px] flex h-7 items-center justify-between pr-[13px]">
          <h3 className="pt-[6px] text-[17px] font-bold leading-6">Cálculo</h3>
          <button aria-label="Ajustes de cálculo">
            <SlidersIcon />
          </button>
        </div>
        <Select label="Cálculo" value="Ninguno" className="mt-[23px] w-full" pad="pl-3" />
        <label htmlFor="calc" className="mt-[14px] block text-[17px] leading-6">
          El valor no se ha calculado
        </label>
        <textarea id="calc" className="mt-[11px] block h-[213px] w-full resize-none rounded-t-[10px] border border-b-0 border-[#444644] bg-[#212221]" />
      </section>
    </aside>
  );
}

export default function App() {
  return (
    <div className="relative flex h-screen flex-col overflow-hidden bg-[#212121] font-['Noto_Sans',sans-serif]">
      <TitleBar />
      <div className="flex min-h-0 flex-1 gap-[3px] pb-[2px] pl-[5px] pr-[2px]">
        <div className="flex w-[401px] shrink-0 rounded-xl bg-[#333334]">
          <Rail />
          <Thumbnails />
        </div>
        <Canvas />
        <Properties />
      </div>
      <svg className="pointer-events-none absolute right-[495px] top-[612px]" width="314" height="260" viewBox="0 0 314 260" aria-hidden="true">
        <path d="M5 255 285 28" stroke="#00a9cd" strokeWidth="8" />
        <path d="M312 5 268 14 294 46Z" fill="#00a9cd" />
      </svg>
    </div>
  );
}
